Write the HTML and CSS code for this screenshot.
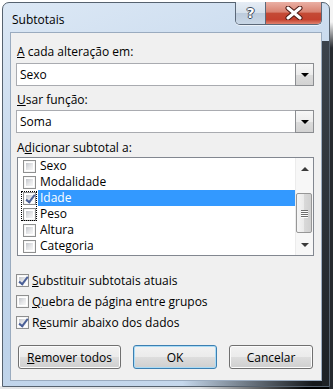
FILE: index.html
```html
<!DOCTYPE html>
<html lang="pt">
<head>
    <meta charset="UTF-8">
    <title>Subtotais</title>
    <link rel="stylesheet" href="styles.css">
</head>
<body>
    <div class="janela">
        <div class="titulo">
            <span class="titulo-texto">Subtotais</span>
            <div class="botoes-titulo">
                <span class="btn-ajuda">?</span>
                <span class="btn-fechar">
                    <svg width="20" height="14" viewBox="0 0 20 14">
                        <path d="M4 2 L16 12 M16 2 L4 12" stroke="#4a1812" stroke-width="5" stroke-linecap="round"/>
                        <path d="M4 2 L16 12 M16 2 L4 12" stroke="#fff" stroke-width="3" stroke-linecap="round"/>
                    </svg>
                </span>
            </div>
        </div>

        <div class="cliente">
            <div class="rotulo"><u>A</u> cada alteração em:</div>
            <div class="combo">
                <span class="combo-texto">Sexo</span>
                <span class="combo-botao"><span class="seta-baixo"></span></span>
            </div>

            <div class="rotulo rotulo-2"><u>U</u>sar função:</div>
            <div class="combo">
                <span class="combo-texto">Soma</span>
                <span class="combo-botao"><span class="seta-baixo"></span></span>
            </div>

            <div class="rotulo rotulo-3">A<u>d</u>icionar subtotal a:</div>
            <div class="lista">
                <div class="lista-itens">
                    <div class="item"><span class="caixa"></span><span class="item-texto">Sexo</span></div>
                    <div class="item"><span class="caixa"></span><span class="item-texto">Modalidade</span></div>
                    <div class="item"><span class="caixa marcada"></span><span class="item-texto selecionado">Idade</span></div>
                    <div class="item"><span class="caixa"></span><span class="item-texto">Peso</span></div>
                    <div class="item"><span class="caixa"></span><span class="item-texto">Altura</span></div>
                    <div class="item"><span class="caixa"></span><span class="item-texto">Categoria</span></div>
                    <div class="foco"></div>
                </div>
                <div class="rolagem">
                    <span class="rolagem-botao"><span class="seta-cima"></span></span>
                    <span class="rolagem-polegar">
                        <span class="grip"></span><span class="grip"></span><span class="grip"></span><span class="grip"></span>
                    </span>
                    <span class="rolagem-botao rolagem-fim"><span class="seta-baixo seta-cinza"></span></span>
                </div>
            </div>

            <div class="opcoes">
                <div class="opcao"><span class="caixa marcada"></span><span><u>S</u>ubstituir subtotais atuais</span></div>
                <div class="opcao"><span class="caixa"></span><span><u>Q</u>uebra de página entre grupos</span></div>
                <div class="opcao"><span class="caixa marcada"></span><span>R<u>e</u>sumir abaixo dos dados</span></div>
            </div>

            <div class="botoes">
                <button class="botao botao-largo"><u>R</u>emover todos</button>
                <button class="botao botao-padrao">OK</button>
                <button class="botao">Cancelar</button>
            </div>
        </div>
    </div>
</body>
</html>
```

FILE: styles.css
```css
/* Janela de diálogo estilo Windows 7 */
* {
    box-sizing: border-box;
}
body {
    margin: 0;
    width: 333px;
    height: 389px;
    overflow: hidden;
    font-family: "Open Sans", "Noto Sans", sans-serif;
    font-size: 12px;
    color: #000;
    background:
        linear-gradient(#f4f4f4 0, #f4f4f4 22px, #262a2f 48px) right top / 4px 100% no-repeat,
        linear-gradient(to right, #e4e6e8 0, #dcdfe2 60%, #000 92%) left bottom / 100% 3px no-repeat,
        #fff;
}
.janela {
    margin: 2px 0 0 2px;
    width: 328px;
    height: 385px;
    border: 1px solid #56626f;
    border-radius: 7px 7px 0 0;
    padding: 0 7px 5px 7px;
    display: flex;
    flex-direction: column;
    background:
        linear-gradient(#3b434c, #1c2024) right top 38px / 7px calc(100% - 38px) no-repeat,
        linear-gradient(to right, rgba(40, 44, 50, 0) 55%, #15181b 95%) left bottom / 100% 5px no-repeat,
        linear-gradient(160deg, #dce8f5 0%, #c7d9ed 35%, #bed3ea 70%, #c9daed 100%);
}
.titulo {
    height: 29px;
    display: flex;
    align-items: flex-start;
}
.titulo-texto {
    margin: 9px 0 0 2px;
    line-height: 15px;
    color: #000;
}
.botoes-titulo {
    margin-left: auto;
    margin-top: -1px;
    display: flex;
    height: 23px;
    border: 1px solid #5b6878;
    border-top: none;
    border-radius: 0 0 5px 5px;
    overflow: hidden;
    box-shadow: 0 1px 0 rgba(255, 255, 255, 0.6);
}
.btn-ajuda {
    width: 30px;
    display: flex;
    align-items: center;
    justify-content: center;
    border-right: 1px solid #5b6878;
    background: linear-gradient(#e6edf5 0%, #d6e1ec 48%, #bccbdc 52%, #c9d7e6 100%);
    color: #fff;
    font-family: "DejaVu Sans", sans-serif;
    font-weight: bold;
    font-size: 14px;
    text-shadow: -1px 0 #3d4a5a, 1px 0 #3d4a5a, 0 -1px #3d4a5a, 0 1px #3d4a5a;
}
.btn-fechar {
    width: 55px;
    display: flex;
    align-items: center;
    justify-content: center;
    background: linear-gradient(#eab0a4 0%, #d98372 45%, #c44a35 52%, #c4412e 80%, #e0826f 100%);
}
.cliente {
    flex: 1;
    border: 1px solid #9aabbf;
    background: #f0f0f0;
    padding: 11px 7px 0 5px;
}
.rotulo {
    line-height: 16px;
    height: 16px;
    padding-left: 1px;
}
.rotulo-2 {
    margin-top: 6px;
}
.rotulo-3 {
    margin-top: 7px;
}
.combo {
    margin-top: 3px;
    height: 23px;
    display: flex;
    align-items: center;
    background: #fff;
    border: 1px solid #a9abb0;
}
.rotulo-2 + .combo {
    margin-top: 2px;
}
.combo-texto {
    flex: 1;
    padding-left: 3px;
}
.combo-botao {
    width: 19px;
    height: 23px;
    margin-right: -1px;
    display: flex;
    align-items: center;
    justify-content: center;
    border: 1px solid #8b8d91;
    background: linear-gradient(#f7f7f7 0%, #ececec 50%, #dcdcdc 51%, #d2d2d2 100%);
}
.seta-baixo {
    width: 0;
    height: 0;
    border-left: 4px solid transparent;
    border-right: 4px solid transparent;
    border-top: 4px solid #000;
}
.seta-cima {
    width: 0;
    height: 0;
    border-left: 4px solid transparent;
    border-right: 4px solid transparent;
    border-bottom: 4px solid #3a3a3a;
}
.seta-cinza {
    border-top-color: #3a3a3a;
}
.lista {
    margin: 1px 0 0 1px;
    height: 99px;
    display: flex;
    background: #fff;
    border: 1px solid #828790;
}
.lista-itens {
    flex: 1;
    position: relative;
}
.item {
    height: 16px;
    display: flex;
    align-items: center;
    padding-left: 5px;
}
.caixa {
    width: 13px;
    height: 13px;
    flex-shrink: 0;
    padding: 2px;
    border: 1px solid #8e8f8f;
    background: linear-gradient(135deg, #c3c6cb 0%, #e6e7e9 55%, #f7f7f7 100%) content-box, #fff;
    box-shadow: inset 0 0 0 1px #f6f6f6;
    position: relative;
}
.caixa.marcada::after {
    content: "";
    position: absolute;
    left: 4px;
    top: 0px;
    width: 3px;
    height: 8px;
    border-right: 2px solid #4a5f97;
    border-bottom: 2px solid #4a5f97;
    transform: rotate(38deg);
}
.item-texto {
    margin-left: 2px;
    padding: 0 2px;
    height: 16px;
    line-height: 16px;
}
.selecionado {
    flex: 1;
    background: #3399ff;
    color: #fff;
}
.foco {
    position: absolute;
    left: 3px;
    top: 33px;
    width: 16px;
    height: 30px;
    border: 1px dotted #000;
}
.rolagem {
    width: 18px;
    display: flex;
    flex-direction: column;
    background: #f7f7f7;
    border-left: 1px solid #ececec;
}
.rolagem-botao {
    height: 21px;
    display: flex;
    align-items: center;
    justify-content: center;
}
.rolagem-fim {
    margin-top: auto;
}
.rolagem-polegar {
    margin-top: 14px;
    width: 16px;
    height: 40px;
    border: 1px solid #979797;
    border-radius: 2px;
    background: linear-gradient(to right, #f5f5f5 0%, #eaeaea 50%, #d9d9d9 51%, #d0d0d0 100%);
    display: flex;
    flex-direction: column;
    align-items: center;
    justify-content: center;
    gap: 1px;
}
.grip {
    width: 7px;
    height: 1px;
    background: #6e6e6e;
    box-shadow: 0 1px 0 #fff;
}
.opcoes {
    margin-top: 14px;
}
.opcao {
    height: 21px;
    display: flex;
    align-items: center;
    gap: 3px;
}
.botoes {
    margin-top: 12px;
    padding-left: 2px;
    display: flex;
    gap: 12px;
}
.botao {
    width: 84px;
    height: 24px;
    padding: 0;
    font-family: inherit;
    font-size: 12px;
    color: #000;
    border: 1px solid #707070;
    border-radius: 3px;
    background: linear-gradient(#f2f2f2 0%, #ebebeb 50%, #dddddd 51%, #cfcfcf 100%);
    box-shadow: inset 0 0 0 1px #fcfcfc;
}
.botao-largo {
    width: 103px;
}
.botao-padrao {
    border-color: #3c7fb1;
    box-shadow: inset 0 0 0 1px #a9dbf6;
}
```
